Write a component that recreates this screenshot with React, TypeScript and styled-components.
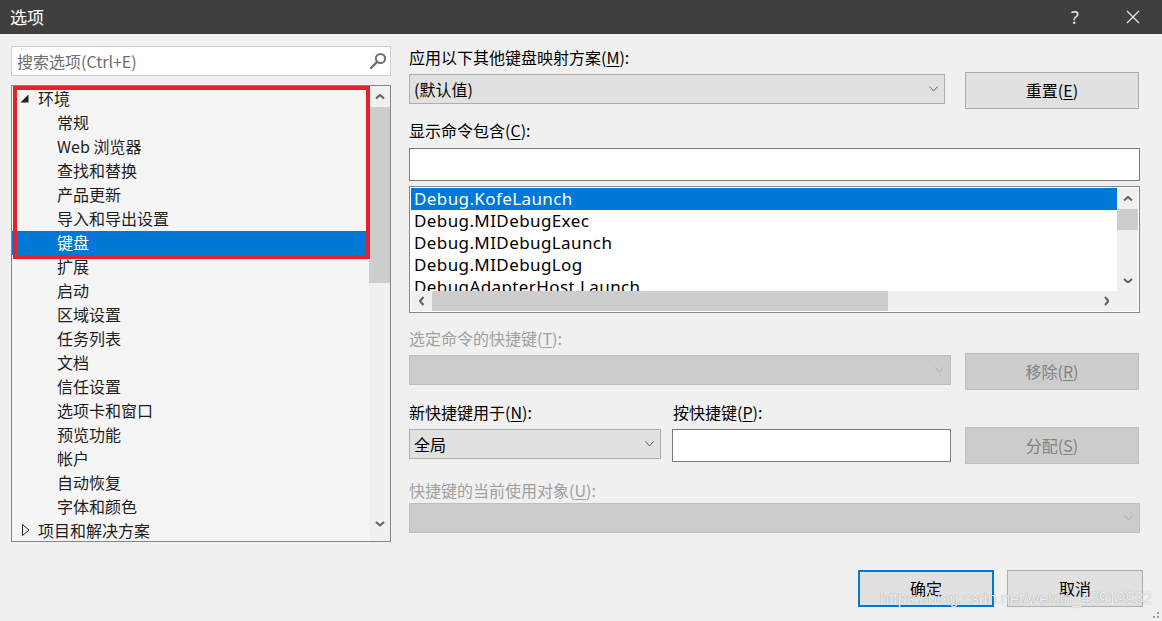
import React from 'react';
import styled, { createGlobalStyle } from 'styled-components';

const Global = createGlobalStyle`
  html, body { margin: 0; padding: 0; background: #f0f0f0; }
  body {
    width: 1162px; height: 621px; overflow: hidden;
    font-family: "Noto Sans CJK SC", "Noto Sans", sans-serif;
  }
  * { box-sizing: border-box; }
`;

const UI = `"Noto Sans CJK SC", "Noto Sans", sans-serif`;
const LATIN = `"Noto Sans", "Noto Sans CJK SC", sans-serif`;

const Window = styled.div`
  position: relative;
  width: 1162px;
  height: 621px;
  display: flex;
  flex-direction: column;
  background: #f0f0f0;
  overflow: hidden;
`;

const TitleBar = styled.div`
  height: 34px;
  flex: none;
  background: #3f3f3f;
  display: flex;
  align-items: center;
  padding-left: 10px;
  color: #ffffff;
`;

const Title = styled.div`
  flex: 1;
  font-size: 17px;
  line-height: 20px;
  padding-bottom: 1px;
`;

const TitleButton = styled.div`
  width: 58px;
  height: 34px;
  display: flex;
  align-items: center;
  justify-content: center;
  color: #e6e6e6;
  font-family: "Noto Sans", sans-serif;
  font-size: 18px;
`;

const Body = styled.div`
  flex: 1;
  display: flex;
  gap: 18px;
  padding: 12px 0 0 11px;
`;

const LeftCol = styled.div`
  width: 380px;
  display: flex;
  flex-direction: column;
`;

const SearchBox = styled.div`
  height: 30px;
  background: #ffffff;
  border: 1px solid #cfcfcf;
  display: flex;
  align-items: center;
  padding: 0 3px 1px 5px;
  font-size: 16px;
  color: #6d6d6d;
`;

const SearchText = styled.span`
  flex: 1;
  white-space: nowrap;
`;

const Tree = styled.div`
  position: relative;
  margin-top: 9px;
  height: 457px;
  border: 1px solid #828790;
  background: #f5f5f5;
  display: flex;
  overflow: hidden;
`;

const TreeItems = styled.div`
  flex: 1;
  padding-top: 1px;
  overflow: hidden;
`;

const TreeRow = styled.div<{ $level: number; $selected?: boolean }>`
  height: 24px;
  display: flex;
  align-items: center;
  padding-left: ${p => (p.$level === 0 ? 8 : 45)}px;
  padding-bottom: 2px;
  font-size: 16px;
  line-height: 22px;
  white-space: nowrap;
  background: ${p => (p.$selected ? '#0078d7' : 'transparent')};
  color: ${p => (p.$selected ? '#ffffff' : '#1e1e1e')};
`;

const Expander = styled.span`
  width: 18px;
  display: flex;
  align-items: center;
`;

const Highlight = styled.div`
  position: absolute;
  left: 1px;
  top: 0px;
  width: 357px;
  height: 173px;
  border: 4px solid #e8202a;
  pointer-events: none;
`;

const VScroll = styled.div<{ $w: number }>`
  width: ${p => p.$w}px;
  flex: none;
  background: #f0f0f0;
  display: flex;
  flex-direction: column;
  align-items: stretch;
`;

const ScrollArrow = styled.div<{ $h: number }>`
  height: ${p => p.$h}px;
  flex: none;
  display: flex;
  align-items: center;
  justify-content: center;
`;

const Thumb = styled.div<{ $h: number }>`
  height: ${p => p.$h}px;
  flex: none;
  background: #cdcdcd;
`;

const Spacer = styled.div`
  flex: 1;
`;

const RightCol = styled.div`
  width: 734px;
  display: flex;
  flex-direction: column;
`;

const Label = styled.div<{ $mt: number; $disabled?: boolean }>`
  margin-top: ${p => p.$mt}px;
  height: 20px;
  font-size: 16px;
  line-height: 19px;
  white-space: nowrap;
  color: ${p => (p.$disabled ? '#a0a0a0' : '#000000')};
  u { text-underline-offset: 2px; }
`;

const Row = styled.div<{ $mt: number; $gap: number; $end?: boolean }>`
  margin-top: ${p => p.$mt}px;
  display: flex;
  align-items: flex-start;
  gap: ${p => p.$gap}px;
  justify-content: ${p => (p.$end ? 'flex-end' : 'flex-start')};
`;

const LabelRow = styled.div<{ $mt: number }>`
  margin-top: ${p => p.$mt}px;
  display: grid;
  grid-template-columns: 264px auto;
`;

const Combo = styled.div<{ $w: number; $disabled?: boolean; $mt?: number }>`
  width: ${p => p.$w}px;
  height: 30px;
  margin-top: ${p => p.$mt ?? 0}px;
  flex: none;
  border: 1px solid ${p => (p.$disabled ? '#bfbfbf' : '#adadad')};
  background: ${p => (p.$disabled ? '#cccccc' : '#e1e1e1')};
  display: flex;
  align-items: center;
  padding: 0 6px 1px 4px;
  font-size: 16px;
  color: #000000;
  white-space: nowrap;
`;

const ComboText = styled.span`
  flex: 1;
`;

const TextBox = styled.div<{ $w: number; $mt?: number }>`
  width: ${p => p.$w}px;
  height: 33px;
  margin-top: ${p => p.$mt ?? 0}px;
  flex: none;
  background: #ffffff;
  border: 1px solid #7a7a7a;
`;

const Button = styled.button<{ $w: number; $disabled?: boolean; $default?: boolean }>`
  width: ${p => p.$w}px;
  height: 37px;
  flex: none;
  padding: 0 0 1px 0;
  margin: 0;
  font-family: ${UI};
  font-size: 16px;
  line-height: 20px;
  background: ${p => (p.$disabled ? '#cccccc' : '#e1e1e1')};
  color: ${p => (p.$disabled ? '#838383' : '#000000')};
  border: ${p =>
    p.$default ? '2px solid #0078d7' : p.$disabled ? '1px solid #bfbfbf' : '1px solid #adadad'};
  u { text-underline-offset: 2px; }
`;

const ListBox = styled.div`
  margin-top: 5px;
  width: 731px;
  height: 127px;
  border: 1px solid #828790;
  background: #ffffff;
  padding: 1px;
  display: grid;
  grid-template-columns: 1fr 21px;
  grid-template-rows: 1fr 20px;
`;

const ListItems = styled.div`
  overflow: hidden;
`;

const ListItem = styled.div<{ $selected?: boolean }>`
  height: 22px;
  padding-left: 3px;
  font-family: ${LATIN};
  font-size: 17px;
  letter-spacing: 0.4px;
  line-height: 21px;
  white-space: nowrap;
  background: ${p => (p.$selected ? '#0078d7' : 'transparent')};
  color: ${p => (p.$selected ? '#ffffff' : '#000000')};
`;

const HScroll = styled.div`
  background: #f0f0f0;
  display: flex;
  align-items: stretch;
`;

const HArrow = styled.div`
  width: 21px;
  flex: none;
  display: flex;
  align-items: center;
  justify-content: center;
`;

const HThumb = styled.div`
  width: 456px;
  flex: none;
  background: #cdcdcd;
`;

const Corner = styled.div`
  background: #f0f0f0;
`;

const Watermark = styled.div`
  position: absolute;
  left: 880px;
  top: 590px;
  font-family: "Liberation Sans", Arial, sans-serif;
  font-size: 16px;
  line-height: 18px;
  color: rgba(255, 255, 255, 0.85);
  text-shadow: 0 0 1px rgba(0, 0, 0, 0.4);
  white-space: nowrap;
  pointer-events: none;
`;

const Grip = styled.div`
  position: absolute;
  right: 2px;
  bottom: 2px;
  width: 8px;
  height: 8px;
  display: flex;
`;

type Dir = 'up' | 'down' | 'left' | 'right';

const Chevron = ({ dir, color, sw = 1, size = 9 }: { dir: Dir; color: string; sw?: number; size?: number }) => {
  const s = size;
  const h = Math.round(s / 2) + 0.5;
  const horiz = dir === 'left' || dir === 'right';
  const w = horiz ? h : s;
  const ht = horiz ? s : h;
  const o = sw / 2;
  let pts = '';
  if (dir === 'down') pts = `${o},${o} ${s / 2},${h - o} ${s - o},${o}`;
  if (dir === 'up') pts = `${o},${h - o} ${s / 2},${o} ${s - o},${h - o}`;
  if (dir === 'right') pts = `${o},${o} ${h - o},${s / 2} ${o},${s - o}`;
  if (dir === 'left') pts = `${h - o},${o} ${o},${s / 2} ${h - o},${s - o}`;
  return (
    <svg width={w} height={ht} viewBox={`0 0 ${w} ${ht}`} style={{ display: 'block' }}>
      <polyline points={pts} fill="none" stroke={color} strokeWidth={sw} />
    </svg>
  );
};

const SearchIcon = () => (
  <svg width="18" height="17" viewBox="0 0 18 17" style={{ display: 'block' }}>
    <circle cx="11.5" cy="6.5" r="4.6" fill="none" stroke="#717171" strokeWidth="2" />
    <line x1="8.2" y1="9.8" x2="2" y2="16" stroke="#717171" strokeWidth="2.4" strokeLinecap="round" />
  </svg>
);

const ExpandedTri = () => (
  <svg width="9" height="9" viewBox="0 0 9 9" style={{ display: 'block' }}>
    <polygon points="8.5,0.5 8.5,8.5 0.5,8.5" fill="#1e1e1e" />
  </svg>
);

const CollapsedTri = () => (
  <svg width="8" height="12" viewBox="0 0 8 12" style={{ display: 'block', marginLeft: 2 }}>
    <polygon points="0.5,0.5 7,6 0.5,11.5" fill="none" stroke="#1e1e1e" strokeWidth="1" />
  </svg>
);

const CloseIcon = () => (
  <svg width="14" height="14" viewBox="0 0 14 14" style={{ display: 'block' }}>
    <line x1="1" y1="1" x2="13" y2="13" stroke="#e6e6e6" strokeWidth="1.3" />
    <line x1="13" y1="1" x2="1" y2="13" stroke="#e6e6e6" strokeWidth="1.3" />
  </svg>
);

const GripIcon = () => (
  <svg width="8" height="8" viewBox="0 0 8 8" style={{ display: 'block' }}>
    <rect x="5" y="1" width="2" height="2" fill="#9a9a9a" />
    <rect x="5" y="5" width="2" height="2" fill="#9a9a9a" />
    <rect x="1" y="5" width="2" height="2" fill="#9a9a9a" />
  </svg>
);

const treeItems: { text: string; level: number; expanded?: boolean; selected?: boolean }[] = [
  { text: '环境', level: 0, expanded: true },
  { text: '常规', level: 1 },
  { text: 'Web 浏览器', level: 1 },
  { text: '查找和替换', level: 1 },
  { text: '产品更新', level: 1 },
  { text: '导入和导出设置', level: 1 },
  { text: '键盘', level: 1, selected: true },
  { text: '扩展', level: 1 },
  { text: '启动', level: 1 },
  { text: '区域设置', level: 1 },
  { text: '任务列表', level: 1 },
  { text: '文档', level: 1 },
  { text: '信任设置', level: 1 },
  { text: '选项卡和窗口', level: 1 },
  { text: '预览功能', level: 1 },
  { text: '帐户', level: 1 },
  { text: '自动恢复', level: 1 },
  { text: '字体和颜色', level: 1 },
  { text: '项目和解决方案', level: 0, expanded: false },
];

const commands = [
  'Debug.KofeLaunch',
  'Debug.MIDebugExec',
  'Debug.MIDebugLaunch',
  'Debug.MIDebugLog',
  'DebugAdapterHost.Launch',
];

export default function App() {
  return (
    <>
      <Global />
      <Window>
        <TitleBar>
          <Title>选项</Title>
          <TitleButton>?</TitleButton>
          <TitleButton>
            <CloseIcon />
          </TitleButton>
        </TitleBar>
        <Body>
          <LeftCol>
            <SearchBox>
              <SearchText>搜索选项(Ctrl+E)</SearchText>
              <SearchIcon />
            </SearchBox>
            <Tree>
              <TreeItems>
                {treeItems.map((t, i) => (
                  <TreeRow key={i} $level={t.level} $selected={t.selected}>
                    {t.level === 0 && (
                      <Expander>{t.expanded ? <ExpandedTri /> : <CollapsedTri />}</Expander>
                    )}
                    {t.text}
                  </TreeRow>
                ))}
              </TreeItems>
              <VScroll $w={21}>
                <ScrollArrow $h={21}>
                  <Chevron dir="up" color="#606060" sw={2} size={10} />
                </ScrollArrow>
                <Thumb $h={176} />
                <Spacer />
                <ScrollArrow $h={34}>
                  <Chevron dir="down" color="#606060" sw={2} size={10} />
                </ScrollArrow>
              </VScroll>
              <Highlight />
            </Tree>
          </LeftCol>

          <RightCol>
            <Label $mt={2}>
              应用以下其他键盘映射方案(<u>M</u>):
            </Label>
            <Row $mt={4} $gap={20}>
              <Combo $w={536} $mt={2}>
                <ComboText>(默认值)</ComboText>
                <Chevron dir="down" color="#606060" />
              </Combo>
              <Button $w={174}>
                重置(<u>E</u>)
              </Button>
            </Row>

            <Label $mt={12}>
              显示命令包含(<u>C</u>):
            </Label>
            <TextBox $w={731} $mt={7} />

            <ListBox>
              <ListItems>
                {commands.map((c, i) => (
                  <ListItem key={c} $selected={i === 0}>
                    {c}
                  </ListItem>
                ))}
              </ListItems>
              <VScroll $w={21}>
                <ScrollArrow $h={21}>
                  <Chevron dir="up" color="#606060" sw={2} size={10} />
                </ScrollArrow>
                <Thumb $h={21} />
                <Spacer />
                <ScrollArrow $h={21}>
                  <Chevron dir="down" color="#606060" sw={2} size={10} />
                </ScrollArrow>
              </VScroll>
              <HScroll>
                <HArrow>
                  <Chevron dir="left" color="#606060" sw={2} size={10} />
                </HArrow>
                <HThumb />
                <Spacer />
                <HArrow>
                  <Chevron dir="right" color="#606060" sw={2} size={10} />
                </HArrow>
              </HScroll>
              <Corner />
            </ListBox>

            <Label $mt={16} $disabled>
              选定命令的快捷键(<u>T</u>):
            </Label>
            <Row $mt={4} $gap={14}>
              <Combo $w={542} $mt={2} $disabled>
                <ComboText />
                <Chevron dir="down" color="#a8a8a8" />
              </Combo>
              <Button $w={174} $disabled>
                移除(<u>R</u>)
              </Button>
            </Row>

            <LabelRow $mt={13}>
              <Label $mt={0}>
                新快捷键用于(<u>N</u>):
              </Label>
              <Label $mt={0}>
                按快捷键(<u>P</u>):
              </Label>
            </LabelRow>
            <Row $mt={4} $gap={11}>
              <Combo $w={252} $mt={2}>
                <ComboText>全局</ComboText>
                <Chevron dir="down" color="#606060" />
              </Combo>
              <TextBox $w={279} $mt={2} />
              <Button $w={174} $disabled style={{ marginLeft: 3 }}>
                分配(<u>S</u>)
              </Button>
            </Row>

            <Label $mt={17} $disabled>
              快捷键的当前使用对象(<u>U</u>):
            </Label>
            <Combo $w={731} $mt={2} $disabled>
              <ComboText />
              <Chevron dir="down" color="#a8a8a8" />
            </Combo>

            <Row $mt={37} $gap={13} $end>
              <Button $w={136} $default>
                确定
              </Button>
              <Button $w={136}>取消</Button>
            </Row>
          </RightCol>
        </Body>
        <Watermark>https://blog.csdn.net/weixin_43919932</Watermark>
        <Grip>
          <GripIcon />
        </Grip>
      </Window>
    </>
  );
}
